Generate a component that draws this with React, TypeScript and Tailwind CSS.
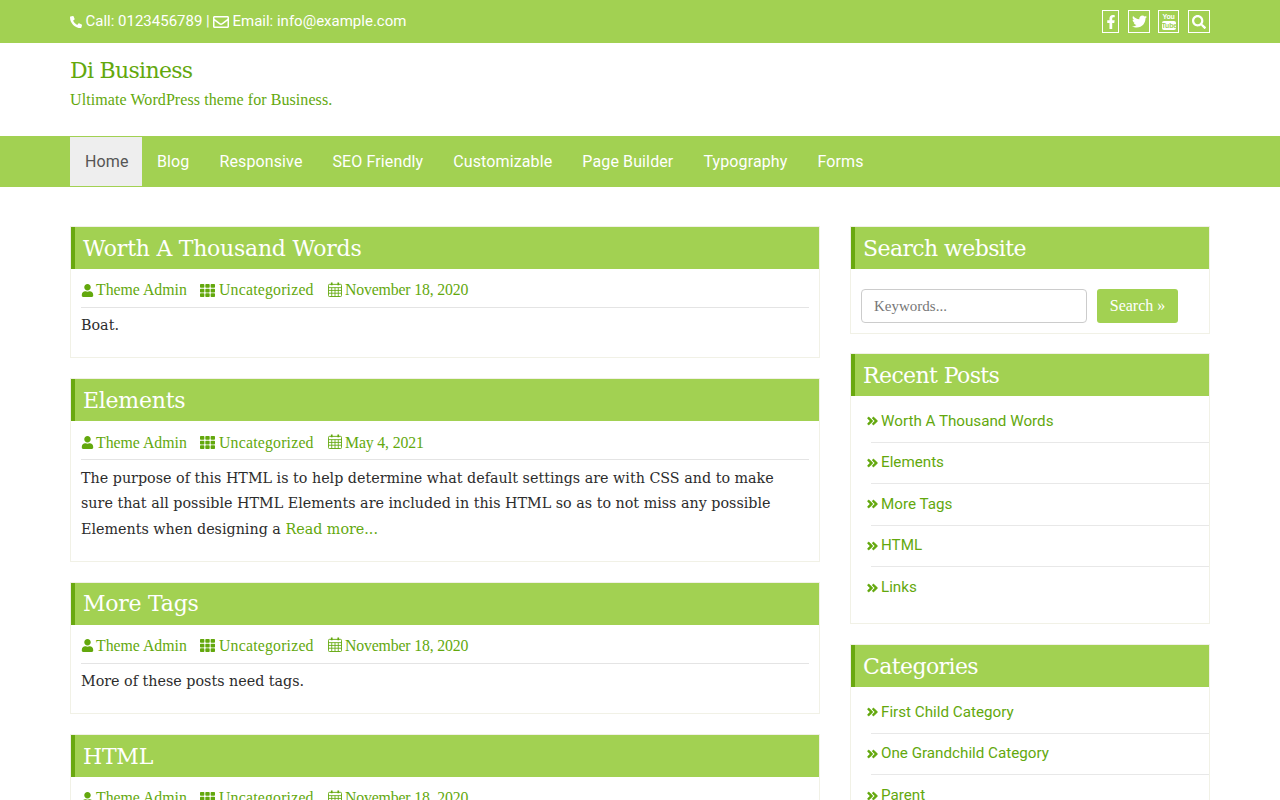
import { FaPhoneAlt, FaRegEnvelope, FaFacebookF, FaTwitter, FaSearch, FaUser, FaTh, FaAngleDoubleRight } from 'react-icons/fa'

const navItems = ['Blog', 'Responsive', 'SEO Friendly', 'Customizable', 'Page Builder', 'Typography', 'Forms']
const recentPosts = ['Worth A Thousand Words', 'Elements', 'More Tags', 'HTML', 'Links']
const categories = ['First Child Category', 'One Grandchild Category', 'Parent']

function CalendarIcon() {
  return (
    <svg viewBox="0 0 15 16" className="w-[14px] h-[15px] mr-[3px] mt-[-2px] shrink-0" fill="none" stroke="currentColor" strokeWidth="1">
      <rect x="0.5" y="2.5" width="14" height="13" rx="1" />
      <path d="M0.5 6h14M0.5 9h14M0.5 12h14M4 6v9.5M7.5 6v9.5M11 6v9.5" strokeWidth="0.9" />
      <path d="M4 0.5v3M11 0.5v3" strokeWidth="1.8" />
    </svg>
  )
}

// stacked youtube mark, no icon package has this old version
function YoutubeMark() {
  return (
    <span className="flex flex-col items-center font-['Liberation_Sans',sans-serif] font-bold">
      <span className="text-[7px] leading-[8px] tracking-[-0.2px]">You</span>
      <span className="bg-white text-[#a2d152] text-[7px] leading-[9px] rounded-[2px] w-[14px] text-center tracking-[-0.2px]">Tube</span>
    </span>
  )
}

function WidgetTitle({ children }: { children: React.ReactNode }) {
  return (
    <h3 className="bg-[#a2d152] border-l-[4px] border-[#69a80f] text-white pl-2 h-[42px] flex items-center text-[22px] font-['DejaVu_Serif',serif] tracking-[-0.6px]">
      {children}
    </h3>
  )
}

function Meta({ date }: { date: string }) {
  return (
    <div className="flex items-center h-[38px] pt-[3px] border-b border-[#e4e4e4] text-[15.8px] text-[#63a80d] font-['Liberation_Serif',serif]">
      <FaUser className="text-[13px] mr-[2px]" />
      <span className="w-[90px] mr-[14px] whitespace-nowrap">Theme Admin</span>
      <FaTh className="text-[15px] mr-[4px]" />
      <span className="w-[95px] mr-[14px] whitespace-nowrap tracking-[0.2px]">Uncategorized</span>
      <CalendarIcon />
      <span className="tracking-[-0.15px]">{date}</span>
    </div>
  )
}

function Post({ title, date, children }: { title: string; date: string; children?: React.ReactNode }) {
  return (
    <article className="border border-[#f1f1e6] mb-[20px]">
      <h2 className="bg-[#a2d152] border-l-[4px] border-[#69a80f] text-white pl-2 h-[42px] flex items-center text-[22px] font-['DejaVu_Serif',serif] tracking-[-0.25px]">
        {title}
      </h2>
      <div className="px-[10px] pt-px pb-[18.4px]">
        <Meta date={date} />
        <div className="pt-[5.4px] text-[14.3px] leading-[25.6px] text-[#2c2c2c] font-['DejaVu_Serif',serif]">{children}</div>
      </div>
    </article>
  )
}

function LinkList({ items }: { items: string[] }) {
  return (
    <ul className="pt-[5px] pl-[20px] pb-[14.5px]">
      {items.map((item, i) => (
        <li key={item} className={`h-[41.5px] flex items-center text-[15.2px] text-[#63a80d] font-['Roboto',sans-serif] ${i < items.length - 1 ? 'border-b border-[#e8e8e8]' : ''}`}>
          <FaAngleDoubleRight strokeWidth={24} className="w-[11px] h-[14px] ml-[-4px] mr-[3px]" />
          {item}
        </li>
      ))}
    </ul>
  )
}

export default function App() {
  return (
    <div className="bg-white h-[800px] overflow-hidden">
      <div className="bg-[#a2d152] text-white h-[43px]">
        <div className="w-[1140px] mx-auto h-full flex items-center justify-between">
          <div className="flex items-center text-[15px] font-['Roboto',sans-serif]">
            <FaPhoneAlt className="text-[12px] mr-[3.5px]" />
            <span>Call: 0123456789 |&nbsp;</span>
            <FaRegEnvelope className="text-[16px] mr-[3px]" />
            <span>Email: info@example.com</span>
          </div>
          <div className="flex items-center">
            <span className="w-[17px] h-[23px] border border-white flex items-center justify-center mr-[9px]"><FaFacebookF className="text-[14px]" /></span>
            <span className="w-[22px] h-[23px] border border-white flex items-center justify-center mr-[8px]"><FaTwitter className="text-[15px]" /></span>
            <span className="w-[21px] h-[23px] border border-white flex items-center justify-center mr-[9px]"><YoutubeMark /></span>
            <span className="w-[22px] h-[23px] border border-white flex items-center justify-center"><FaSearch className="text-[14px]" /></span>
          </div>
        </div>
      </div>

      <header className="h-[93px]">
        <div className="w-[1140px] mx-auto pt-[15px]">
          <div className="text-[22px] leading-[26px] text-[#63a80d] font-['DejaVu_Serif',serif] tracking-[-0.7px]">Di Business</div>
          <div className="mt-[5px] text-[16px] leading-[22px] tracking-[0.08px] text-[#63a80d] font-['Liberation_Serif',serif]">Ultimate WordPress theme for Business.</div>
        </div>
      </header>

      <nav className="bg-[#a2d152] h-[51px] py-px">
        <div className="w-[1140px] mx-auto h-full flex text-[16px] tracking-[0.12px] font-['Roboto',sans-serif] text-white">
          <a className="bg-[#eeeeee] text-[#555555] w-[72px] pl-[15px] flex items-center">Home</a>
          {navItems.map(item => (
            <a key={item} className="px-[15px] flex items-center">{item}</a>
          ))}
        </div>
      </nav>

      <main className="w-[1140px] mx-auto pt-[39px] flex gap-[30px] items-start">
        <div className="w-[750px] shrink-0">
          <Post title="Worth A Thousand Words" date="November 18, 2020">Boat.</Post>
          <Post title="Elements" date="May 4, 2021">
            The purpose of this HTML is to help determine what default settings are with CSS and to make<br />
            sure that all possible HTML Elements are included in this HTML so as to not miss any possible<br />
            Elements when designing a <a className="text-[#63a80d]">Read more...</a>
          </Post>
          <Post title="More Tags" date="November 18, 2020">More of these posts need tags.</Post>
          <Post title="HTML" date="November 18, 2020" />
        </div>

        <aside className="w-[360px] shrink-0">
          <section className="border border-[#f1f1e6] mb-[20px]">
            <WidgetTitle>Search website</WidgetTitle>
            <div className="flex px-[10px] pt-[20px] pb-[10px]">
              <input placeholder="Keywords..." className="w-[226px] h-[34px] px-[12px] border border-[#cccccc] rounded-[4px] text-[15px] font-['Liberation_Serif',serif] placeholder:text-[#777777]" />
              <button className="ml-[10px] w-[81px] h-[34px] bg-[#a2d152] rounded-[3px] text-white text-[16px] font-['Liberation_Serif',serif]">Search »</button>
            </div>
          </section>
          <section className="border border-[#f1f1e6] mb-[20px] mt-[-1px]">
            <WidgetTitle>Recent Posts</WidgetTitle>
            <LinkList items={recentPosts} />
          </section>
          <section className="border border-[#f1f1e6] mb-[20px]">
            <WidgetTitle>Categories</WidgetTitle>
            <LinkList items={categories} />
          </section>
        </aside>
      </main>
    </div>
  )
}
